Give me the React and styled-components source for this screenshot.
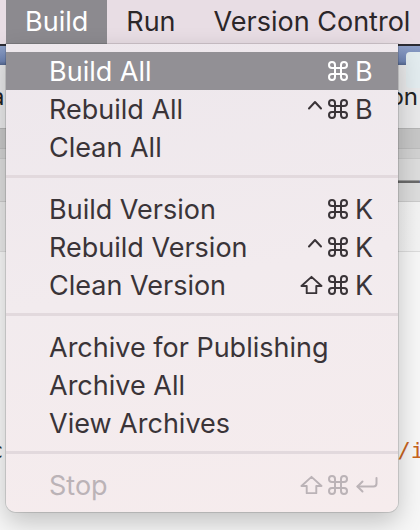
import React from "react";
import styled, { createGlobalStyle } from "styled-components";

const GlobalStyle = createGlobalStyle`
  html, body { margin: 0; padding: 0; }
  body { font-family: Inter, "Noto Sans", "DejaVu Sans", sans-serif; background: #f4f4f4; }
`;

const Page = styled.div`
  position: relative;
  width: 420px;
  height: 530px;
  overflow: hidden;
  display: flex;
  flex-direction: column;
  background: #f5f5f5;
`;

const MenuBar = styled.div`
  height: 44px;
  flex: none;
  display: flex;
  padding-left: 6px;
  background: #e8dde4;
`;

const MenuTitle = styled.div`
  padding: 0 19px;
  line-height: 44px;
  font-size: 27px;
  color: ${(p) => (p.$active ? "#ffffff" : "#2b2629")};
  background: ${(p) => (p.$active ? "#8c8a8f" : "transparent")};
  white-space: nowrap;
`;

const Window = styled.div`
  flex: 1;
  display: flex;
  flex-direction: column;
  border-top: 2px solid #2c2c33;
`;

const TitleStrip = styled.div`
  height: 19px;
  flex: none;
  background: linear-gradient(#8ea0c8, #6f84b3 80%, #55688f);
  display: flex;
  justify-content: flex-end;
  align-items: flex-start;
  padding-top: 6px;
  box-sizing: border-box;
`;

const Panel = styled.div`
  width: 14px;
  height: 36px;
  border-radius: 4px 0 0 4px;
  background: #e3ecef;
  position: relative;
  z-index: 1;
`;

const Toolbar = styled.div`
  height: 63px;
  flex: none;
  background: #e9e9ea;
  display: flex;
  justify-content: space-between;
  align-items: center;
  font-size: 24px;
  color: #222;
  overflow: hidden;
`;

const EdgeText = styled.span`
  white-space: nowrap;
  margin-left: ${(p) => p.$ml || 0}px;
  margin-right: ${(p) => p.$mr || 0}px;
  color: ${(p) => p.$color || "inherit"};
`;

const Band = styled.div`
  height: ${(p) => p.$h}px;
  flex: none;
  background: ${(p) => p.$bg};
  border-top: 1px solid ${(p) => p.$line || "#bdbdbd"};
`;

const Header = styled.div`
  height: 42px;
  flex: none;
  background: #dddddd;
  border-top: 1px solid #c9c9c9;
  border-bottom: 1px solid #cbcbcb;
  display: flex;
  justify-content: flex-end;
  align-items: center;
  font-size: 24px;
  font-weight: 600;
  color: #6a6a6a;
  overflow: hidden;
`;

const Fade = styled.div`
  height: 49px;
  flex: none;
  background: linear-gradient(90deg, #e9e9e9, #f3f3f3);
  border-bottom: 1px solid #dcdcdc;
`;

const Editor = styled.div`
  flex: 1;
  background: #f7f7f7;
  display: flex;
  flex-direction: column;
  padding-top: 186px;
`;

const CodeLine = styled.div`
  display: flex;
  justify-content: space-between;
  font-family: "DejaVu Sans Mono", "Liberation Mono", monospace;
  font-size: 22px;
  line-height: 26px;
  color: #2d2d2d;
  overflow: hidden;
`;

const Menu = styled.div`
  position: absolute;
  top: 44px;
  left: 6px;
  width: 392px;
  box-sizing: border-box;
  padding: 8px 0 8px;
  background: linear-gradient(170deg, #ede7ec 0%, #f2ebee 50%, #f6eced 100%);
  border-radius: 0 0 10px 10px;
  box-shadow: 0 0 0 1px rgba(0, 0, 0, 0.12), 0 10px 26px rgba(0, 0, 0, 0.22);
  z-index: 5;
`;

const Item = styled.div`
  height: 38px;
  display: flex;
  align-items: center;
  padding: 0 18px 0 43px;
  font-size: 27px;
  color: ${(p) => (p.$active ? "#ffffff" : p.$disabled ? "#bbb3b7" : "#3a3438")};
  background: ${(p) => (p.$active ? "#929095" : "transparent")};
  white-space: nowrap;
`;

const Label = styled.span`
  flex: 1;
`;

const Shortcut = styled.span`
  display: flex;
  align-items: center;
  gap: 5px;
`;

const Key = styled.span`
  width: 25px;
  margin-left: 2px;
  display: flex;
  align-items: center;
  justify-content: flex-start;
`;

const Glyph = styled.svg`
  display: block;
  height: ${(p) => p.$h || 20}px;
  fill: none;
  stroke: currentColor;
  stroke-width: 2;
  stroke-linejoin: round;
  stroke-linecap: round;
`;

const Separator = styled.div`
  height: 3px;
  margin: 9px 0 12px;
  background: #e2d9dd;
`;

const Cmd = () => (
  <Glyph viewBox="0 0 20 20" width="20" $h={20}>
    <path d="M7 7V4a3 3 0 1 0-3 3h12a3 3 0 1 0-3-3v12a3 3 0 1 0 3-3H4a3 3 0 1 0 3 3Z" />
  </Glyph>
);

const Ctrl = () => (
  <Glyph viewBox="0 0 16 20" width="16" $h={20}>
    <path d="M2 9.5L8 3l6 6.5" />
  </Glyph>
);

const Shift = () => (
  <Glyph viewBox="0 0 24 20" width="23" $h={20}>
    <path d="M12 1.5L22.5 11H17v7.5H7V11H1.5Z" />
  </Glyph>
);

const Return = () => (
  <Glyph viewBox="0 0 24 20" width="24" $h={20}>
    <path d="M21.5 3v5.5a3 3 0 0 1-3 3H2.5" />
    <path d="M7.5 6.5l-5 5 5 5" />
  </Glyph>
);

const mods = { ctrl: Ctrl, cmd: Cmd, shift: Shift };

const groups = [
  [
    { label: "Build All", mods: ["cmd"], key: "B", active: true },
    { label: "Rebuild All", mods: ["ctrl", "cmd"], key: "B" },
    { label: "Clean All" },
  ],
  [
    { label: "Build Version", mods: ["cmd"], key: "K" },
    { label: "Rebuild Version", mods: ["ctrl", "cmd"], key: "K" },
    { label: "Clean Version", mods: ["shift", "cmd"], key: "K" },
  ],
  [
    { label: "Archive for Publishing" },
    { label: "Archive All" },
    { label: "View Archives" },
  ],
  [{ label: "Stop", mods: ["shift", "cmd"], key: "return", disabled: true }],
];

export default function App() {
  return (
    <>
      <GlobalStyle />
      <Page>
        <MenuBar>
          <MenuTitle $active>Build</MenuTitle>
          <MenuTitle>Run</MenuTitle>
          <MenuTitle>Version Control</MenuTitle>
        </MenuBar>
        <Window>
          <TitleStrip>
            <Panel />
          </TitleStrip>
          <Toolbar>
            <EdgeText $ml={-9}>a</EdgeText>
            <EdgeText $mr={2}>on</EdgeText>
          </Toolbar>
          <Band $h={19} $bg="#c7c7c7" $line="#b5b5b5" />
          <Band $h={9} $bg="#d2d2d2" $line="#bcbcbc" />
          <Header>
            <EdgeText>s —</EdgeText>
          </Header>
          <Fade />
          <Editor>
            <CodeLine>
              <EdgeText $ml={-10}>c</EdgeText>
              <EdgeText $mr={-4} $color="#c8641e">/i</EdgeText>
            </CodeLine>
          </Editor>
        </Window>
        <Menu>
          {groups.map((g, gi) => (
            <React.Fragment key={gi}>
              {gi > 0 && <Separator />}
              {g.map((it) => (
                <Item key={it.label} $active={it.active} $disabled={it.disabled}>
                  <Label>{it.label}</Label>
                  {it.key && (
                    <Shortcut>
                      {it.mods.map((m) => {
                        const M = mods[m];
                        return <M key={m} />;
                      })}
                      <Key>{it.key === "return" ? <Return /> : it.key}</Key>
                    </Shortcut>
                  )}
                </Item>
              ))}
            </React.Fragment>
          ))}
        </Menu>
      </Page>
    </>
  );
}
